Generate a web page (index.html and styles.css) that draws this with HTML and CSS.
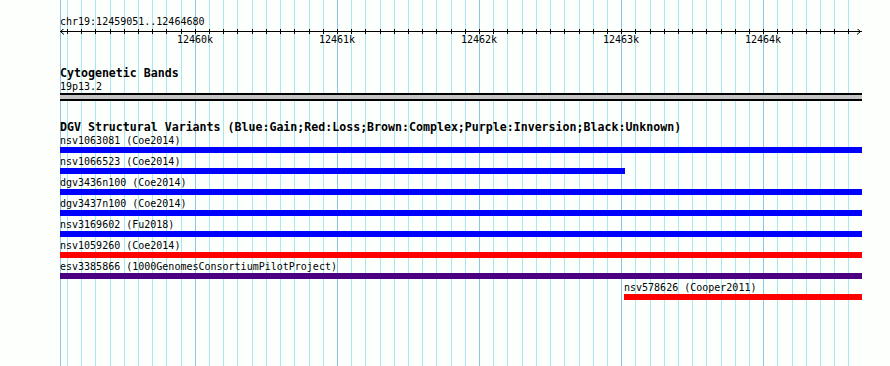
FILE: index.html
```html
<!DOCTYPE html>
<html lang="en">
<head>
    <meta charset="UTF-8">
    <title>chr19:12459051..12464680</title>
    <link rel="stylesheet" href="styles.css">
</head>
<body>
    <div class="page">
        <svg class="grid" width="890" height="366" viewBox="0 0 890 366" shape-rendering="crispEdges">
            <g class="minor">
                <line x1="67.5" y1="0" x2="67.5" y2="366"/>
                <line x1="81.5" y1="0" x2="81.5" y2="366"/>
                <line x1="95.5" y1="0" x2="95.5" y2="366"/>
                <line x1="110.5" y1="0" x2="110.5" y2="366"/>
                <line x1="124.5" y1="0" x2="124.5" y2="366"/>
                <line x1="138.5" y1="0" x2="138.5" y2="366"/>
                <line x1="152.5" y1="0" x2="152.5" y2="366"/>
                <line x1="166.5" y1="0" x2="166.5" y2="366"/>
                <line x1="181.5" y1="0" x2="181.5" y2="366"/>
                <line x1="209.5" y1="0" x2="209.5" y2="366"/>
                <line x1="223.5" y1="0" x2="223.5" y2="366"/>
                <line x1="237.5" y1="0" x2="237.5" y2="366"/>
                <line x1="252.5" y1="0" x2="252.5" y2="366"/>
                <line x1="266.5" y1="0" x2="266.5" y2="366"/>
                <line x1="280.5" y1="0" x2="280.5" y2="366"/>
                <line x1="294.5" y1="0" x2="294.5" y2="366"/>
                <line x1="309.5" y1="0" x2="309.5" y2="366"/>
                <line x1="323.5" y1="0" x2="323.5" y2="366"/>
                <line x1="351.5" y1="0" x2="351.5" y2="366"/>
                <line x1="365.5" y1="0" x2="365.5" y2="366"/>
                <line x1="380.5" y1="0" x2="380.5" y2="366"/>
                <line x1="394.5" y1="0" x2="394.5" y2="366"/>
                <line x1="408.5" y1="0" x2="408.5" y2="366"/>
                <line x1="422.5" y1="0" x2="422.5" y2="366"/>
                <line x1="436.5" y1="0" x2="436.5" y2="366"/>
                <line x1="451.5" y1="0" x2="451.5" y2="366"/>
                <line x1="465.5" y1="0" x2="465.5" y2="366"/>
                <line x1="493.5" y1="0" x2="493.5" y2="366"/>
                <line x1="507.5" y1="0" x2="507.5" y2="366"/>
                <line x1="522.5" y1="0" x2="522.5" y2="366"/>
                <line x1="536.5" y1="0" x2="536.5" y2="366"/>
                <line x1="550.5" y1="0" x2="550.5" y2="366"/>
                <line x1="564.5" y1="0" x2="564.5" y2="366"/>
                <line x1="579.5" y1="0" x2="579.5" y2="366"/>
                <line x1="593.5" y1="0" x2="593.5" y2="366"/>
                <line x1="607.5" y1="0" x2="607.5" y2="366"/>
                <line x1="635.5" y1="0" x2="635.5" y2="366"/>
                <line x1="650.5" y1="0" x2="650.5" y2="366"/>
                <line x1="664.5" y1="0" x2="664.5" y2="366"/>
                <line x1="678.5" y1="0" x2="678.5" y2="366"/>
                <line x1="692.5" y1="0" x2="692.5" y2="366"/>
                <line x1="706.5" y1="0" x2="706.5" y2="366"/>
                <line x1="721.5" y1="0" x2="721.5" y2="366"/>
                <line x1="735.5" y1="0" x2="735.5" y2="366"/>
                <line x1="749.5" y1="0" x2="749.5" y2="366"/>
                <line x1="777.5" y1="0" x2="777.5" y2="366"/>
                <line x1="792.5" y1="0" x2="792.5" y2="366"/>
                <line x1="806.5" y1="0" x2="806.5" y2="366"/>
                <line x1="820.5" y1="0" x2="820.5" y2="366"/>
                <line x1="834.5" y1="0" x2="834.5" y2="366"/>
                <line x1="848.5" y1="0" x2="848.5" y2="366"/>
            </g>
            <g class="major">
                <line x1="60.5" y1="0" x2="60.5" y2="366"/>
                <line x1="195.5" y1="0" x2="195.5" y2="366"/>
                <line x1="337.5" y1="0" x2="337.5" y2="366"/>
                <line x1="479.5" y1="0" x2="479.5" y2="366"/>
                <line x1="621.5" y1="0" x2="621.5" y2="366"/>
                <line x1="763.5" y1="0" x2="763.5" y2="366"/>
            </g>
        </svg>

        <div class="tracks">
            <div class="coords">chr19:12459051..12464680</div>
            <svg class="ruler" width="890" height="20" viewBox="0 0 890 20" shape-rendering="crispEdges">
                <g class="axis">
                    <line x1="60" y1="2.5" x2="862" y2="2.5"/>
                    <polyline points="64,-0.5 60.5,2.5 64,5.5" shape-rendering="auto"/>
                    <polyline points="857,-0.5 860.5,2.5 857,5.5" shape-rendering="auto"/>
                    <path d="M67.5 0v5M81.5 0v5M95.5 0v5M110.5 0v5M124.5 0v5M138.5 0v5M152.5 0v5M166.5 0v5M181.5 0v5M195.5 0v5
                             M209.5 0v5M223.5 0v5M237.5 0v5M252.5 0v5M266.5 0v5M280.5 0v5M294.5 0v5M309.5 0v5M323.5 0v5M337.5 0v5
                             M351.5 0v5M365.5 0v5M380.5 0v5M394.5 0v5M408.5 0v5M422.5 0v5M436.5 0v5M451.5 0v5M465.5 0v5M479.5 0v5
                             M493.5 0v5M507.5 0v5M522.5 0v5M536.5 0v5M550.5 0v5M564.5 0v5M579.5 0v5M593.5 0v5M607.5 0v5M621.5 0v5
                             M635.5 0v5M650.5 0v5M664.5 0v5M678.5 0v5M692.5 0v5M706.5 0v5M721.5 0v5M735.5 0v5M749.5 0v5M763.5 0v5
                             M777.5 0v5M792.5 0v5M806.5 0v5M820.5 0v5M834.5 0v5M848.5 0v5"/>
                </g>
                <g class="tick-labels">
                    <text x="195" y="14">12460k</text>
                    <text x="337" y="14">12461k</text>
                    <text x="479" y="14">12462k</text>
                    <text x="621" y="14">12463k</text>
                    <text x="763" y="14">12464k</text>
                </g>
            </svg>

            <div class="track-title cyto-title">Cytogenetic Bands</div>
            <div class="cyto-label">19p13.2</div>
            <svg class="band" width="802" height="8" viewBox="0 0 802 8" shape-rendering="crispEdges">
                <rect x="0" y="0" width="802" height="8" fill="#000000"/>
                <rect x="0" y="2" width="802" height="4" fill="#c4c4c4"/>
            </svg>

            <div class="track-title dgv-title">DGV Structural Variants (Blue:Gain;Red:Loss;Brown:Complex;Purple:Inversion;Black:Unknown)</div>

            <div class="sv-row">
                <div class="sv-label">nsv1063081 (Coe2014)</div>
                <div class="sv-bar gain" style="width: 802px"></div>
            </div>
            <div class="sv-row">
                <div class="sv-label">nsv1066523 (Coe2014)</div>
                <div class="sv-bar gain" style="width: 565px"></div>
            </div>
            <div class="sv-row">
                <div class="sv-label">dgv3436n100 (Coe2014)</div>
                <div class="sv-bar gain" style="width: 802px"></div>
            </div>
            <div class="sv-row">
                <div class="sv-label">dgv3437n100 (Coe2014)</div>
                <div class="sv-bar gain" style="width: 802px"></div>
            </div>
            <div class="sv-row">
                <div class="sv-label">nsv3169602 (Fu2018)</div>
                <div class="sv-bar gain" style="width: 802px"></div>
            </div>
            <div class="sv-row">
                <div class="sv-label">nsv1059260 (Coe2014)</div>
                <div class="sv-bar loss" style="width: 802px"></div>
            </div>
            <div class="sv-row">
                <div class="sv-label">esv3385866 (1000GenomesConsortiumPilotProject)</div>
                <div class="sv-bar inversion" style="width: 802px"></div>
            </div>
            <div class="sv-row" style="margin-left: 564px">
                <div class="sv-label">nsv578626 (Cooper2011)</div>
                <div class="sv-bar loss" style="width: 238px"></div>
            </div>
        </div>
    </div>
</body>
</html>
```

FILE: styles.css
```css
body {
    margin: 0;
    background-color: #ffffff;
    color: #000000;
    font-family: "DejaVu Sans Mono", "Liberation Mono", monospace;
    font-size: 10px;
}

.page {
    position: relative;
    width: 890px;
    height: 366px;
    overflow: hidden;
    background-color: #fdfffd;
}

.grid {
    position: absolute;
    top: 0;
    left: 0;
}

.grid .minor line {
    stroke: #a8e8f0;
    stroke-width: 1;
}

.grid .major line {
    stroke: #8cc4ea;
    stroke-width: 1;
}

.tracks {
    position: relative;
    padding-left: 60px;
}

.coords {
    padding-top: 14px;
    line-height: 15px;
    height: 15px;
}

.ruler {
    display: block;
    margin-left: -60px;
}

.ruler .axis line,
.ruler .axis path,
.ruler .axis polyline {
    stroke: #000000;
    stroke-width: 1;
    fill: none;
}

.ruler .tick-labels text {
    font-family: "DejaVu Sans Mono", "Liberation Mono", monospace;
    font-size: 10px;
    text-anchor: middle;
    fill: #000000;
}

.track-title {
    font-weight: bold;
    font-size: 11.6px;
    line-height: 15px;
    white-space: nowrap;
}

.cyto-title {
    margin-top: 17px;
    height: 15px;
}

.cyto-label {
    line-height: 12px;
    height: 12px;
}

.band {
    display: block;
}

.dgv-title {
    padding-top: 19px;
    height: 12px;
}

.sv-row {
    height: 21px;
}

.sv-label {
    box-sizing: border-box;
    height: 15px;
    padding-top: 2px;
    line-height: 13px;
    white-space: nowrap;
}

.sv-bar {
    height: 6px;
}

.gain {
    background-color: #0000ff;
}

.loss {
    background-color: #ff0000;
}

.inversion {
    background-color: #4b0082;
}
```
